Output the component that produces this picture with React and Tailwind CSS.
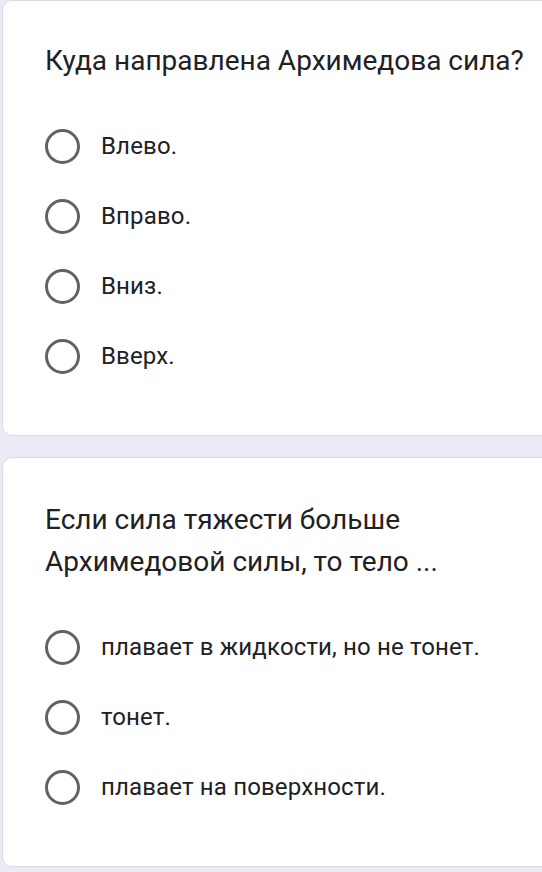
import React from 'react';

const questions = [
    {
        title: ['Куда направлена Архимедова сила?'],
        options: ['Влево.', 'Вправо.', 'Вниз.', 'Вверх.'],
    },
    {
        title: ['Если сила тяжести больше', 'Архимедовой силы, то тело ...'],
        options: ['плавает в жидкости, но не тонет.', 'тонет.', 'плавает на поверхности.'],
    },
];

const Radio = () => (
    <span className="block w-[35px] h-[35px] shrink-0 rounded-full border-[3px] border-[#5f6368]"></span>
);

const QuestionCard = ({ question, className }) => (
    <div className={`ml-[2px] -mr-4 bg-white rounded-[10px] border border-[#dadce0] ${className}`}>
        <div className="pl-[42px] mb-[47px] text-[28px] leading-[42px] text-[#202124] font-['Roboto',sans-serif]">
            {question.title.map((line) => (
                <div key={line}>{line}</div>
            ))}
        </div>
        <div className="flex flex-col gap-[35px] pl-[42px]">
            {question.options.map((option) => (
                <label key={option} className="flex items-center gap-[21px]">
                    <Radio />
                    <span className="text-[24px] leading-[35px] tracking-[0.15px] text-[#202124] font-['Roboto',sans-serif]">{option}</span>
                </label>
            ))}
        </div>
    </div>
);

const App = () => {
    return (
        <div className="w-[542px] h-[872px] overflow-hidden bg-[#ede9f6]">
            <QuestionCard question={questions[0]} className="h-[436px] pt-[39px]" />
            <div className="h-[21px]"></div>
            <QuestionCard question={questions[1]} className="h-[410px] pt-[41px]" />
        </div>
    );
};

export default App;
